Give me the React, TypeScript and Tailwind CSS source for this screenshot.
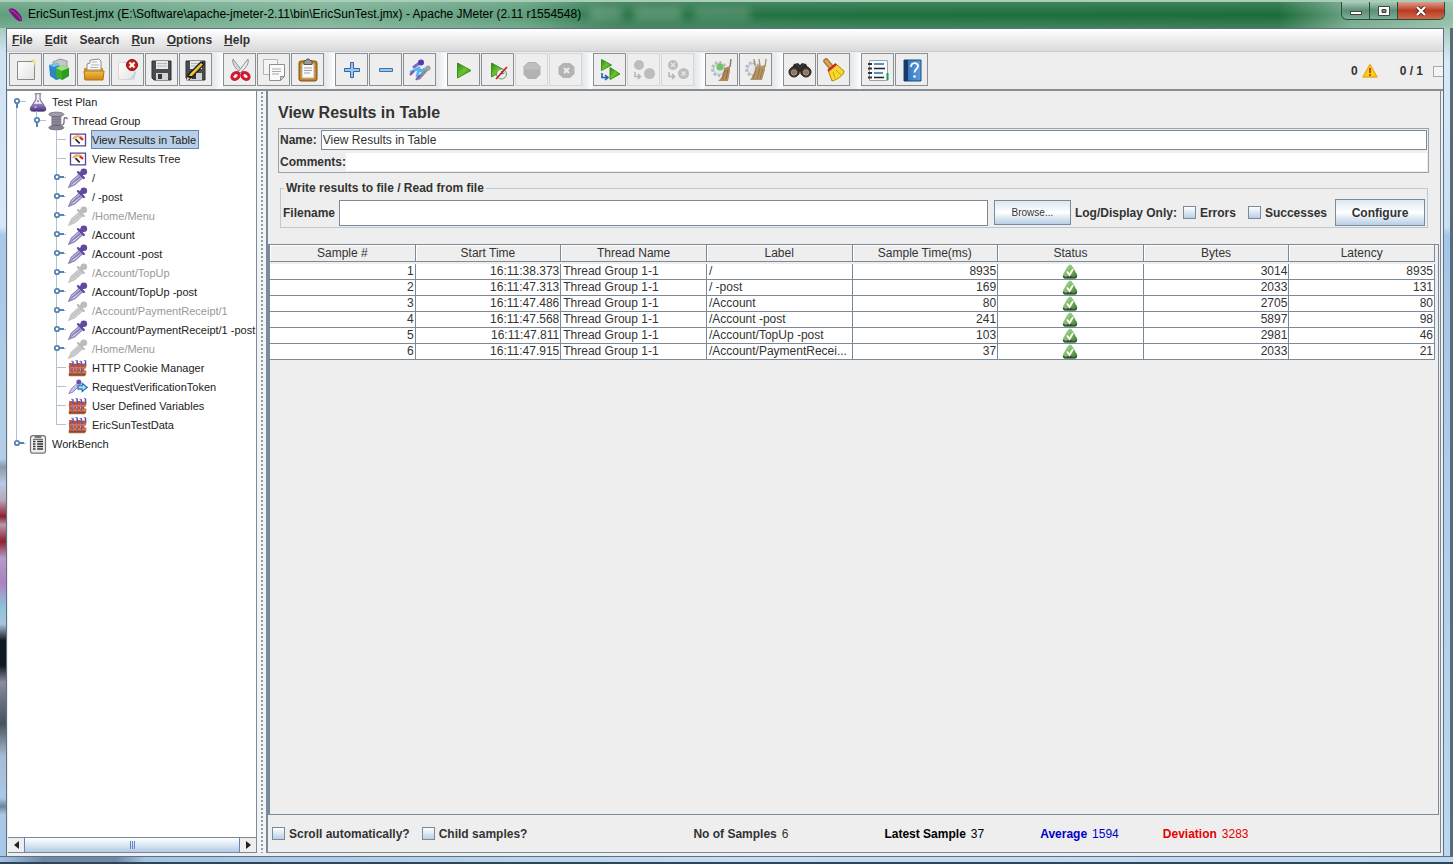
import { useState, type ReactNode } from "react";
import clsx from "clsx";

type Guide = "none" | "line" | "tee" | "corner" | "open" | "openLast" | "closed" | "closedLast";

type Node = {
  label: string;
  icon: keyof typeof treeIcons;
  guides: Guide[];
  disabled?: boolean;
};

type Tool = { name: string; icon: ReactNode; disabled?: boolean };

const samples = [
  { n: 1, start: "16:11:38.373", thread: "Thread Group 1-1", label: "/", time: 8935, bytes: 3014, latency: 8935 },
  { n: 2, start: "16:11:47.313", thread: "Thread Group 1-1", label: "/ -post", time: 169, bytes: 2033, latency: 131 },
  { n: 3, start: "16:11:47.486", thread: "Thread Group 1-1", label: "/Account", time: 80, bytes: 2705, latency: 80 },
  { n: 4, start: "16:11:47.568", thread: "Thread Group 1-1", label: "/Account -post", time: 241, bytes: 5897, latency: 98 },
  { n: 5, start: "16:11:47.811", thread: "Thread Group 1-1", label: "/Account/TopUp -post", time: 103, bytes: 2981, latency: 46 },
  { n: 6, start: "16:11:47.915", thread: "Thread Group 1-1", label: "/Account/PaymentRecei...", time: 37, bytes: 2033, latency: 21 },
];

const columns = ["Sample #", "Start Time", "Thread Name", "Label", "Sample Time(ms)", "Status", "Bytes", "Latency"];

const menus = [
  { key: "F", rest: "ile" },
  { key: "E", rest: "dit" },
  { key: "", rest: "Search" },
  { key: "R", rest: "un" },
  { key: "O", rest: "ptions" },
  { key: "H", rest: "elp" },
];

/* ---------- shared gradients ---------- */

function Gradients() {
  return (
    <svg className="absolute size-0" aria-hidden="true">
      <defs>
        <linearGradient id="green" x1="0" y1="0" x2="1" y2="1">
          <stop offset="0" stopColor="#1f8a1c" />
          <stop offset="0.5" stopColor="#6cc52c" />
          <stop offset="1" stopColor="#2c7f10" />
        </linearGradient>
        <linearGradient id="folder" x1="0" y1="0" x2="0" y2="1">
          <stop offset="0" stopColor="#f3bd4e" />
          <stop offset="1" stopColor="#cf8512" />
        </linearGradient>
        <linearGradient id="paper" x1="0" y1="0" x2="1" y2="1">
          <stop offset="0" stopColor="#ffffff" />
          <stop offset="1" stopColor="#e2e2e2" />
        </linearGradient>
        <linearGradient id="book" x1="0" y1="0" x2="1" y2="0">
          <stop offset="0" stopColor="#2f6fb8" />
          <stop offset="1" stopColor="#5a9be0" />
        </linearGradient>
        <linearGradient id="tick" x1="0" y1="0" x2="1" y2="1">
          <stop offset="0" stopColor="#b4dca4" />
          <stop offset="0.5" stopColor="#7db868" />
          <stop offset="1" stopColor="#3c6e32" />
        </linearGradient>
        <linearGradient id="flask" x1="0" y1="0" x2="0" y2="1">
          <stop offset="0" stopColor="#9c86c8" />
          <stop offset="1" stopColor="#4a2f7c" />
        </linearGradient>
      </defs>
    </svg>
  );
}

function Icon({ children, className = "size-6" }: { children: ReactNode; className?: string }) {
  return (
    <svg viewBox="0 0 24 24" className={clsx("block shrink-0", className)} fill="none" aria-hidden="true">
      {children}
    </svg>
  );
}

/* ---------- toolbar icons ---------- */

const floppy = (
  <>
    <path d="M2 3h19v19H4l-2-2z" fill="#4a4d50" stroke="#2f3133" />
    <path d="M6 3h12v8H6z" fill="#e6e8ea" />
    <path d="M7 5.500h10M7 8h10" stroke="#b4b8bc" />
    <path d="M6 15h12v7H6z" fill="#d0d3d6" />
    <path d="M8 16h4v5H8z" fill="#34373a" />
  </>
);

const grayNodes = (
  <>
    <circle cx="7" cy="7" r="5" fill="#bdbdbd" />
    <circle cx="17.500" cy="15.500" r="5.500" fill="#bdbdbd" />
    <path d="M3 14v4.500h5M6 16l2.500 2.500L6 21" stroke="#b5b5b5" strokeWidth="1.500" />
  </>
);

const gear = (
  <>
    <circle cx="9" cy="11" r="6.500" stroke="#b4bcc4" strokeWidth="3" strokeDasharray="2.500 1.800" />
    <circle cx="9" cy="11" r="5.500" fill="#e3e8ea" stroke="#b4bcc4" />
  </>
);

const toolGroups: Tool[][] = [
  [
    {
      name: "New",
      icon: (
        <Icon>
          <path d="M3.500 3.500h17v18h-17z" fill="url(#paper)" stroke="#8a8a8a" />
          <path d="M15 2l5 2 1 6 1-7-2-2z" fill="#f0ea7c" />
        </Icon>
      ),
    },
    {
      name: "Templates",
      icon: (
        <Icon>
          <path d="M5 4l7-3 7 2v8L5 12z" fill="#c3c8cc" stroke="#8d959b" />
          <path d="M1 7l9-2 2 4v12l-4 1-6-4z" fill="#2a86c8" />
          <path d="M1 7l9-2 2 2-6 2z" fill="#7dc2ec" />
          <path d="M8 10l7-3 6 3v8l-7 4-6-3z" fill="#3fae2a" />
          <path d="M8 10l7-3 6 3-7 3z" fill="#9be27c" />
          <path d="M14 13l7-3v8l-7 4z" fill="#2f9a22" />
        </Icon>
      ),
    },
    {
      name: "Open",
      icon: (
        <Icon>
          <path d="M5 12V6l3-1V2l9-1 2 2v9z" fill="#fafafa" stroke="#8b8b8b" />
          <path d="M10 4h5M9 7h8M8 9.500h8" stroke="#b4b4b4" />
          <path d="M2 10h3v3h14v-3h2v11l-1 1H3l-1-1z" fill="#d69020" />
          <path d="M2 13h20l-1 9H3z" fill="url(#folder)" stroke="#b5740f" />
        </Icon>
      ),
    },
    {
      name: "Close",
      icon: (
        <Icon>
          <path d="M2.500 4.500h16v17h-16z" fill="url(#paper)" stroke="#d8d8d8" />
          <path d="M20 13c0 5-3 8-8 8.500 5-2 5-5 8-8.500z" fill="#a6d5df" />
          <circle cx="16" cy="7" r="5.500" fill="#c4201c" stroke="#8c100e" />
          <path d="M13.500 4.500l5 5M18.500 4.500l-5 5" stroke="#fff" strokeWidth="2" />
        </Icon>
      ),
    },
    { name: "Save", icon: <Icon>{floppy}</Icon> },
    {
      name: "Save as",
      icon: (
        <Icon>
          {floppy}
          <path d="M2 23l2-7L17 3l4 3L8 20z" fill="#1c1c1c" />
          <path d="M5 18l1-2L17 5l2 1.500L8 18z" fill="#f2c230" />
          <path d="M2 23l1.500-4L6 20.500z" fill="#f4dcae" />
        </Icon>
      ),
    },
  ],
  [
    {
      name: "Cut",
      icon: (
        <Icon>
          <path d="M5 1c-1 4 1 8 8 14l2-1C11 9 8 5 5 1z" fill="#d9dcde" stroke="#8b9094" />
          <path d="M20 1c1 4-1 8-8 14l-2-1c4-5 7-9 10-13z" fill="#eceeef" stroke="#8b9094" />
          <ellipse cx="7.500" cy="18" rx="4" ry="3" stroke="#d01830" strokeWidth="3" transform="rotate(-40 7.500 18)" />
          <ellipse cx="17.500" cy="18" rx="4" ry="3" stroke="#d01830" strokeWidth="3" transform="rotate(40 17.500 18)" />
        </Icon>
      ),
    },
    {
      name: "Copy",
      icon: (
        <Icon>
          <path d="M1.500 1.500h14v15h-14z" fill="#f4f4f4" stroke="#b4b4b4" />
          <path d="M7.500 6.500h15v12l-4 4h-11z" fill="#fafafa" stroke="#8f8f8f" />
          <path d="M10 11h9M10 13.500h9M10 16h7" stroke="#a9a9a9" />
          <path d="M18.500 22.500v-4h4z" fill="#d0d0d0" stroke="#8f8f8f" />
        </Icon>
      ),
    },
    {
      name: "Paste",
      icon: (
        <Icon>
          <rect x="3" y="3" width="18" height="20" rx="2" fill="#c48420" stroke="#7d5210" />
          <path d="M6 6h12v14H6z" fill="#fafafa" stroke="#b9b9b9" />
          <path d="M8 10h8M8 12.500h8M8 15h6" stroke="#9f9f9f" />
          <path d="M8 2.500h2l1-1.500h2l1 1.500h2v4H8z" fill="#9a9a96" stroke="#55554f" />
        </Icon>
      ),
    },
  ],
  [
    {
      name: "Expand all",
      icon: (
        <Icon>
          <path d="M10.500 4.500h3v6h6v3h-6v6h-3v-6h-6v-3h6z" fill="#9cc6ee" stroke="#2f68a8" />
        </Icon>
      ),
    },
    {
      name: "Collapse all",
      icon: (
        <Icon>
          <path d="M5.500 10.500h13v3h-13z" fill="#9cc6ee" stroke="#3f74ac" />
        </Icon>
      ),
    },
    {
      name: "Toggle",
      icon: (
        <Icon>
          <path d="M6 9l7-5" stroke="#7a6cc4" strokeWidth="3" strokeLinecap="round" />
          <circle cx="13" cy="4.500" r="3" fill="#5b35b0" />
          <path d="M11 20l8-9" stroke="#8a8a9c" strokeWidth="3.500" strokeLinecap="round" />
          <circle cx="20" cy="10" r="2.600" fill="#a3a394" />
          <path d="M3 14l8-4 1 3 5-2M11 11l-2 7" stroke="#4fb6f0" strokeWidth="2.600" strokeLinecap="round" />
          <path d="M2 17l4-4M8 22l4-5" stroke="#7a54b8" strokeWidth="2" />
        </Icon>
      ),
    },
  ],
  [
    {
      name: "Start",
      icon: (
        <Icon>
          <path d="M5.500 5v15L19 12.500z" fill="url(#green)" stroke="#3b8f1c" />
        </Icon>
      ),
    },
    {
      name: "Start no pauses",
      icon: (
        <Icon>
          <path d="M5.500 5v14L18 12z" fill="url(#green)" stroke="#3b8f1c" />
          <circle cx="15.500" cy="16" r="5" fill="#e8efe8" stroke="#6b8f78" />
          <path d="M15.500 13v3l3-1" stroke="#5d6f66" />
          <path d="M10 21L21 9" stroke="#cc1414" strokeWidth="1.600" />
        </Icon>
      ),
    },
    {
      name: "Stop",
      disabled: true,
      icon: (
        <Icon>
          <path d="M8 4h8l4.500 4.500v8L16 21H8l-4.500-4.500v-8z" fill="#b3b3b3" />
          <path d="M8 5h8l3 3.500v3H5v-3z" fill="#bebebe" />
        </Icon>
      ),
    },
    {
      name: "Shutdown",
      disabled: true,
      icon: (
        <Icon>
          <path d="M9 5h7l4.500 4v7L16 20H9l-4.500-4V9z" fill="#b3b3b3" />
          <path d="M10 10l5 5M15 10l-5 5" stroke="#ececec" strokeWidth="2.200" />
        </Icon>
      ),
    },
  ],
  [
    {
      name: "Remote start all",
      icon: (
        <Icon>
          <path d="M3.500 1.500v11l10-5.500z" fill="url(#green)" stroke="#3b8f1c" />
          <path d="M12 9.500v12L22 16z" fill="url(#green)" stroke="#3b8f1c" />
          <path d="M4 15v4.500h5M7 17l3 2.500L7 22" stroke="#1f62a8" strokeWidth="1.600" />
        </Icon>
      ),
    },
    { name: "Remote stop all", disabled: true, icon: <Icon>{grayNodes}</Icon> },
    {
      name: "Remote shutdown all",
      disabled: true,
      icon: (
        <Icon>
          {grayNodes}
          <path d="M5 5l4 4M9 5L5 9M15.500 13.500l4 4M19.500 13.500l-4 4" stroke="#e6e6e6" strokeWidth="1.400" />
        </Icon>
      ),
    },
  ],
  [
    {
      name: "Clear",
      icon: (
        <Icon>
          {gear}
          <circle cx="10" cy="9" r="3.500" fill="#6fc46a" />
          <path d="M20 9l1-8" stroke="#9a8468" strokeWidth="1.600" />
          <path d="M14 10l6-2v5l-2 10H8c4-3 6-8 6-13z" fill="#b08a5c" />
          <path d="M15 12l-3 9M18 11l-2 10" stroke="#8f6c44" />
        </Icon>
      ),
    },
    {
      name: "Clear all",
      icon: (
        <Icon>
          {gear}
          <path d="M11 8l-1-7M16 8l-1-7M21 9l1-8" stroke="#a89478" strokeWidth="1.400" />
          <path d="M11 9l4-2 2 1 4-1v5l-3 10H6c3-4 5-8 5-13z" fill="#b59468" />
          <path d="M12 12l-3 9M16 10l-3 11M19 11l-3 10" stroke="#967650" />
        </Icon>
      ),
    },
  ],
  [
    {
      name: "Search",
      icon: (
        <Icon>
          <path d="M6 6l4-1 2 2 2-2 4 1 5 9-10 2-1-4-1 4-10-2z" fill="#33302e" />
          <circle cx="6" cy="14" r="5" fill="#4a3a30" stroke="#1d1a18" />
          <circle cx="18" cy="14" r="5" fill="#4a3a30" stroke="#1d1a18" />
          <circle cx="6" cy="14.500" r="2.600" fill="#8a7260" stroke="#b29a86" />
          <circle cx="18" cy="14.500" r="2.600" fill="#8a7260" stroke="#b29a86" />
        </Icon>
      ),
    },
    {
      name: "Reset search",
      icon: (
        <Icon>
          <path d="M4 3l5 6" stroke="#a8742c" strokeWidth="5.500" strokeLinecap="round" />
          <path d="M4 3l5 6" stroke="#d8a458" strokeWidth="3" strokeLinecap="round" />
          <path d="M6 12l8-6 8 7c0 5-8 9-12 10z" fill="#f6d82c" stroke="#b08410" />
          <path d="M5.500 11.500L13.500 5l1.500 2-8.500 7z" fill="#c8301c" />
          <path d="M11 14l2 6M14 12l5 5" stroke="#d2a012" />
        </Icon>
      ),
    },
  ],
  [
    {
      name: "Function helper",
      icon: (
        <Icon>
          <path d="M3.500 2.500h18v20h-18z" fill="#f8fafc" stroke="#9aa4ad" />
          <path d="M8 6h10M8 15h9" stroke="#1f6fb8" strokeWidth="1.400" />
          <path d="M8 10.500h11M8 19.500h10" stroke="#222" strokeWidth="1.400" />
          <path d="M2 6h4M2 10.500h4M2 15h4M2 19.500h4" stroke="#333" strokeWidth="1.800" />
          <path d="M20.500 15h2v7h-2z" fill="#1f9a54" />
        </Icon>
      ),
    },
    {
      name: "Help",
      icon: (
        <Icon>
          <path d="M4 2h17v21H4z" fill="url(#book)" stroke="#1c4a80" />
          <path d="M4 2h4v21H4z" fill="#173a66" />
          <path d="M11 9c0-5 7-5 7-1 0 3-3.500 3-3.500 6.500" stroke="#fff" strokeWidth="1.800" />
          <circle cx="14.500" cy="18.500" r="1.300" fill="#fff" />
        </Icon>
      ),
    },
  ],
];

/* ---------- tree icons ---------- */

function Pipette({ body, bulb, glass }: { body: string; bulb: string; glass: string }) {
  return (
    <>
      <path d="M1 23l3-7L14 7l4 4L8 20z" fill={glass} stroke={body} strokeWidth="1.600" />
      <path d="M2 22l3-5L14 9l2 2z" fill={body} />
      <path d="M12 5l7 7" stroke={bulb} strokeWidth="2.800" strokeLinecap="round" />
      <path d="M15 8l4-4" stroke={bulb} strokeWidth="5" />
      <circle cx="19" cy="4.500" r="4" fill={bulb} />
    </>
  );
}

const treeIcons = {
  flask: (
    <>
      <path d="M8 2h8M9.500 2v7L3 19c-1 3 1 4 3 4h12c2 0 4-1 3-4L14.500 9V2z" fill="#f3f1f8" stroke="#77708a" strokeWidth="1.300" />
      <path d="M6.500 14h11l4 6c0 2-1 3-3 3H6c-2 0-4-1-3-4z" fill="url(#flask)" />
      <circle cx="9" cy="18" r="1.500" fill="#b7a5e0" />
      <circle cx="12" cy="11" r="1.200" fill="#8a74b8" />
    </>
  ),
  spool: (
    <>
      <path d="M4 4h12v15H4z" fill="#8d8798" />
      <path d="M5 7h10M5 10h10M5 13h10M5 16h10" stroke="#787284" />
      <ellipse cx="10" cy="4" rx="9" ry="2.600" fill="#a39dae" stroke="#6c6678" />
      <ellipse cx="10" cy="20" rx="9" ry="2.600" fill="#8b8498" stroke="#625c6e" />
      <path d="M16 17c6 0 1-9 5-9 2 0 2 1 2 2" stroke="#6b6478" strokeWidth="1.500" />
    </>
  ),
  gauge: (
    <>
      <path d="M3 5h18v14H3z" fill="#fff" stroke="#54449a" strokeWidth="1.600" />
      <path d="M6 11c2-4 9-5 12 0" stroke="#ecb060" strokeWidth="2.600" />
      <path d="M14 9l4 3" stroke="#cf2a1c" strokeWidth="2.200" />
      <path d="M9 11l5 5" stroke="#222" strokeWidth="2" />
    </>
  ),
  pipette: <Pipette body="#8b80b8" bulb="#6249a0" glass="#e4e0f0" />,
  pipetteOff: <Pipette body="#c4c4c4" bulb="#bcbcbc" glass="#d4d4d4" />,
  config: (
    <>
      <path d="M1 10l3-3h18v4l-1 2H1zM1 18l3-3h18v4l-2 3H1z" fill="#b4704a" />
      <path d="M3 6v15M8 7v14M13 6v15M18 7v14" stroke="#c0503a" strokeWidth="3.200" />
      <path d="M6 4v6M11 3v7M16 4v6M21 3v6" stroke="#5b4fae" strokeWidth="1.800" />
      <path d="M4 4h2M9 3h2M14 4h2M19 3h2" stroke="#8878c8" strokeWidth="1.400" />
      <path d="M2 12h19M2 17h19" stroke="#d89878" strokeWidth="1.200" />
      <path d="M5 12v6M11 12v6M16 12v6" stroke="#7a5a8a" strokeWidth="1.600" />
      <path d="M1 20h20" stroke="#8a4a30" strokeWidth="1.600" />
    </>
  ),
  extractor: (
    <>
      <path d="M1 20l3-6 8-7 3 2-9 9z" fill="#c8c0e4" stroke="#8276b4" />
      <circle cx="13" cy="6" r="3" fill="#6a54a8" />
      <path d="M12 10.500h5V7.500l6 5-6 5v-3h-5z" fill="#a4dcf4" stroke="#1f6fb0" strokeWidth="1.400" />
    </>
  ),
  clipboard: (
    <>
      <rect x="3" y="2" width="18" height="21" rx="3" fill="#f0f0f0" stroke="#777" strokeWidth="1.500" />
      <path d="M8 2h8v3H8z" fill="#777" />
      <path d="M6 9h3M6 12h3M6 15h3M6 18h3M11 9h7M11 12h7M11 15h7M11 18h7" stroke="#333" strokeWidth="1.600" />
      <path d="M6 6.500h12" stroke="#444" />
    </>
  ),
};

const tree: Node[] = [
  { label: "Test Plan", icon: "flask", guides: ["open"] },
  { label: "Thread Group", icon: "spool", guides: ["line", "openLast"] },
  { label: "View Results in Table", icon: "gauge", guides: ["line", "none", "tee"] },
  { label: "View Results Tree", icon: "gauge", guides: ["line", "none", "tee"] },
  { label: "/", icon: "pipette", guides: ["line", "none", "closed"] },
  { label: "/ -post", icon: "pipette", guides: ["line", "none", "closed"] },
  { label: "/Home/Menu", icon: "pipetteOff", guides: ["line", "none", "closed"], disabled: true },
  { label: "/Account", icon: "pipette", guides: ["line", "none", "closed"] },
  { label: "/Account -post", icon: "pipette", guides: ["line", "none", "closed"] },
  { label: "/Account/TopUp", icon: "pipetteOff", guides: ["line", "none", "closed"], disabled: true },
  { label: "/Account/TopUp -post", icon: "pipette", guides: ["line", "none", "closed"] },
  { label: "/Account/PaymentReceipt/1", icon: "pipetteOff", guides: ["line", "none", "closed"], disabled: true },
  { label: "/Account/PaymentReceipt/1 -post", icon: "pipette", guides: ["line", "none", "closed"] },
  { label: "/Home/Menu", icon: "pipetteOff", guides: ["line", "none", "closed"], disabled: true },
  { label: "HTTP Cookie Manager", icon: "config", guides: ["line", "none", "tee"] },
  { label: "RequestVerificationToken", icon: "extractor", guides: ["line", "none", "tee"] },
  { label: "User Defined Variables", icon: "config", guides: ["line", "none", "tee"] },
  { label: "EricSunTestData", icon: "config", guides: ["line", "none", "corner"] },
  { label: "WorkBench", icon: "clipboard", guides: ["closedLast"] },
];

function GuideCell({ kind }: { kind: Guide }) {
  const up = kind !== "none" && kind !== "open";
  const down = kind === "line" || kind === "tee" || kind === "closed" || kind === "open";
  const handle = kind.startsWith("open") || kind.startsWith("closed");
  return (
    <svg viewBox="0 0 20 19" className="h-[19px] w-5 shrink-0" fill="none" aria-hidden="true">
      {up && <path d="M8.500 0v10" stroke="#b0c2d4" />}
      {down && <path d="M8.500 9v10" stroke="#b0c2d4" />}
      {kind !== "none" && kind !== "line" && <path d="M9 9.500h9" stroke="#b0c2d4" />}
      {handle && (
        <>
          {kind.startsWith("open") ? (
            <path d="M9 11v5" stroke="#5a82b4" strokeWidth="2" />
          ) : (
            <path d="M11 9h5" stroke="#5a82b4" strokeWidth="2" />
          )}
          <circle cx="9" cy="9" r="2.200" fill="#fff" stroke="#5a82b4" strokeWidth="1.800" />
        </>
      )}
    </svg>
  );
}

function TreeRow({ node, selected, onSelect }: { node: Node; selected: boolean; onSelect: () => void }) {
  return (
    <li className="flex h-[19px] items-center">
      {node.guides.map((g, i) => (
        <GuideCell key={i} kind={g} />
      ))}
      <Icon className="mr-[3px] size-5">{treeIcons[node.icon]}</Icon>
      <button
        onClick={onSelect}
        className={clsx(
          "h-[19px] whitespace-nowrap border pr-0.5 text-[11px] leading-4",
          selected ? "border-[#6382bf] bg-[#b8cfe5]" : "border-transparent",
          node.disabled ? "text-[#999]" : "text-[#222]",
        )}
      >
        {node.label}
      </button>
    </li>
  );
}

function TickBox({ id, label }: { id: string; label: string }) {
  return (
    <span className="flex items-center gap-1">
      <input
        id={id}
        type="checkbox"
        className="size-[13px] shrink-0 appearance-none border border-[#7a8a99] bg-linear-to-b from-white to-[#b8cfe5] checked:bg-[#6382bf]"
      />
      <label htmlFor={id} className="whitespace-nowrap font-bold">
        {label}
      </label>
    </span>
  );
}

function PassIcon() {
  return (
    <svg viewBox="0 0 16 15" className="mx-auto block h-[15px] w-4" fill="none" aria-label="Success">
      <path d="M8 .500c1 0 2.500 2 4 4.500l3 5.500c.5 2-.5 3.500-2 4H3c-1.500-.5-2.500-2-2-4L4 5C5.500 2.500 7 .500 8 .500z" fill="url(#tick)" />
      <path d="M.800 11.500L4 13l4-1.500 4 2 3.200-2c0 2-1 3-2.200 3H3C1.500 14.500.800 13.500.800 11.500z" fill="#2f5228" />
      <path d="M5 7.500l2.500 3.500 3.500-6" stroke="#fbfff4" strokeWidth="1.800" />
    </svg>
  );
}

function TitleBar() {
  return (
    <header className="relative flex h-7 shrink-0 items-center overflow-hidden border-t-2 border-[#a8cdb9] bg-[linear-gradient(90deg,#5f9f7d_0,#79b092_22%,#5c9c7a_36%,#2a7549_42%,#1f7040_60%,#1c6b3a_88%,#6da486_93%,#8fbca4_100%)]">
      <div className="absolute inset-0 bg-linear-to-b from-white/15 via-transparent to-white/15" />
      <div className="absolute top-1.5 left-[590px] flex gap-3 blur-xs" aria-hidden="true">
        <span className="h-3 w-8 bg-white/25" />
        <span className="h-3 w-12 bg-white/25" />
        <span className="h-3 w-14 bg-white/20" />
      </div>
      <svg viewBox="0 0 16 16" className="relative ml-2 size-4" fill="none" aria-hidden="true">
        <path d="M1 2c2-1.500 5-1 8 2s6 7 5 10c-3 1-6-1-9-5S0 4 1 2z" fill="#7c1480" />
        <path d="M2 3c4 1 8 5 11 10" stroke="#b84cc0" />
      </svg>
      <h1 className="relative ml-1 truncate pb-0.5 font-['Liberation_Sans',Arial,sans-serif] text-[12px] text-black">
        EricSunTest.jmx (E:\Software\apache-jmeter-2.11\bin\EricSunTest.jmx) - Apache JMeter (2.11 r1554548)
      </h1>
      <div className="relative mr-2 ml-auto flex h-[18px] shrink-0 self-start overflow-hidden rounded-b-md border border-t-0 border-[#24503a] text-white">
        <button aria-label="Minimize" className="grid w-7 place-items-center border-r border-[#24503a] bg-linear-to-b from-[#a8cbb8] via-[#5c8f76] to-[#7fae96]">
          <span className="mt-1 h-1 w-3 border border-[#444] bg-white" />
        </button>
        <button aria-label="Maximize" className="grid w-7 place-items-center border-r border-[#24503a] bg-linear-to-b from-[#a8cbb8] via-[#5c8f76] to-[#7fae96]">
          <svg viewBox="0 0 12 10" className="h-2.5 w-3" fill="none" aria-hidden="true">
            <path d="M.5.500h11v9H.5z" fill="#fff" stroke="#444" />
            <path d="M4 3.500h4v3H4z" fill="#5c8f76" stroke="#444" />
          </svg>
        </button>
        <button aria-label="Close window" className="grid w-[46px] place-items-center bg-linear-to-b from-[#dd9c8c] via-[#b93a20] to-[#d0684c]">
          <svg viewBox="0 0 12 10" className="h-2.5 w-3" aria-hidden="true">
            <path d="M2 1l8 8M10 1L2 9" stroke="#5a2018" strokeWidth="4" />
            <path d="M2 1l8 8M10 1L2 9" stroke="#fff" strokeWidth="2.400" />
          </svg>
        </button>
      </div>
    </header>
  );
}

function MenuBar() {
  return (
    <nav className="flex h-[23px] shrink-0 items-center gap-3 border-b border-[#ccc] bg-linear-to-b from-white to-[#dadada] pl-[5px] font-bold">
      {menus.map((m) => (
        <button key={m.key + m.rest}>
          {m.key && <u>{m.key}</u>}
          {m.rest}
        </button>
      ))}
    </nav>
  );
}

function Toolbar() {
  return (
    <div className="flex h-[39px] shrink-0 items-start border-b-2 border-[#888d92] pt-px">
      <div className="flex pl-0.5">
        {toolGroups.map((group, i) => (
          <div key={i} className="flex">
            {i > 0 && <span className="h-9 w-[11px] bg-linear-to-r from-[#e2e6ea] to-white" />}
            <div className="flex gap-px">
              {group.map((tool) => (
                <button
                  key={tool.name}
                  aria-label={tool.name}
                  disabled={tool.disabled}
                  className={clsx(
                    "grid size-[33px] place-items-center border bg-[#eee]",
                    tool.disabled ? "border-[#d4d6d8]" : "border-[#8a9096]",
                  )}
                >
                  {tool.icon}
                </button>
              ))}
            </div>
          </div>
        ))}
      </div>
      <div className="ml-auto flex h-9 items-center overflow-hidden font-bold">
        <span>0</span>
        <svg viewBox="0 0 16 16" className="ml-1 size-4" fill="none" aria-hidden="true">
          <path d="M8 1.500L15 14H1z" fill="#fcd116" stroke="#f0a818" strokeWidth="1.400" strokeLinejoin="round" />
          <path d="M8 5v5M8 11v2" stroke="#a04a08" strokeWidth="1.800" />
        </svg>
        <span className="ml-[22px]">0 / 1</span>
        <span className="ml-2.5 h-[11px] w-2.5 border border-r-0 border-[#aaa] bg-[#f4f4f4]" />
      </div>
    </div>
  );
}

function TreePane() {
  const [selected, setSelected] = useState(2);
  return (
    <aside className="flex w-[249px] shrink-0 flex-col border-r border-[#7a8a99] bg-white">
      <ul className="flex-1 overflow-hidden pt-px">
        {tree.map((node, i) => (
          <TreeRow key={i} node={node} selected={i === selected} onSelect={() => setSelected(i)} />
        ))}
      </ul>
      <div className="flex h-4 shrink-0 border-y border-[#7a8a99] bg-[#eee]">
        <button aria-label="Scroll left" className="grid w-4 place-items-center">
          <svg viewBox="0 0 5 8" className="h-2 w-[5px]" aria-hidden="true">
            <path d="M5 0v8L0 4z" fill="#222" />
          </svg>
        </button>
        <div className="flex flex-1 items-center justify-center gap-px border-x border-[#6382bf] bg-linear-to-b from-white via-[#dbe7f3] to-[#b0cbe6]">
          <span className="h-2 w-px bg-[#6382bf]" />
          <span className="h-2 w-px bg-[#6382bf]" />
          <span className="h-2 w-px bg-[#6382bf]" />
        </div>
        <button aria-label="Scroll right" className="grid w-4 place-items-center">
          <svg viewBox="0 0 5 8" className="h-2 w-[5px]" aria-hidden="true">
            <path d="M0 0v8l5-4z" fill="#222" />
          </svg>
        </button>
      </div>
    </aside>
  );
}

function FileFields() {
  return (
    <>
      <div className="mr-[11px] ml-2.5 border border-[#9aa3ab] p-px">
        <div className="flex h-5 items-center gap-1">
          <label htmlFor="name" className="font-bold">
            Name:
          </label>
          <input
            id="name"
            defaultValue="View Results in Table"
            className="h-5 min-w-0 flex-1 border border-[#7a8a99] bg-white px-px outline-none"
          />
        </div>
        <div className="mt-[3px] flex h-[18px] items-center">
          <label htmlFor="comments" className="font-bold">
            Comments:
          </label>
          <input id="comments" className="h-[18px] min-w-0 flex-1 bg-white px-px outline-none" />
        </div>
      </div>
      <fieldset className="mt-2 mr-3 ml-3 flex-none border border-[#bcc8d2] px-0.5 pb-px">
        <legend className="ml-px px-0.5 font-bold leading-[14px]">Write results to file / Read from file</legend>
        <div className="mt-1 flex h-[27px] items-center">
          <label htmlFor="filename" className="font-bold">
            Filename
          </label>
          <input
            id="filename"
            className="ml-1 h-[26px] min-w-0 flex-1 border border-[#7a8a99] bg-white px-px outline-none"
          />
          <button className="ml-1.5 h-[25px] w-[77px] border border-[#7a8a99] bg-linear-to-b from-[#dce8f3] via-white to-[#b8cfe5] text-[10px]">
            Browse...
          </button>
          <span className="ml-1 whitespace-nowrap font-bold">Log/Display Only:</span>
          <span className="ml-1.5 flex gap-3">
            <TickBox id="errors" label="Errors" />
            <TickBox id="successes" label="Successes" />
          </span>
          <button className="ml-2 h-[27px] w-[90px] border border-[#7a8a99] bg-linear-to-b from-[#dce8f3] via-white to-[#b8cfe5] font-bold">
            Configure
          </button>
        </div>
      </fieldset>
    </>
  );
}

function ResultsTable() {
  const num = "border-r border-b border-[#7a8a99] bg-white pr-px text-right";
  const txt = "truncate border-r border-b border-[#7a8a99] bg-white px-0.5 text-left";
  return (
    <div className="mr-px min-h-0 flex-1 overflow-hidden border border-l-2 border-[#7a8a99] pr-[3px]">
      <table className="w-full table-fixed border-separate border-spacing-0 text-[12px] leading-[15px]">
        <thead>
          <tr>
            {columns.map((c) => (
              <th key={c} scope="col" className="p-0 pb-0.5 font-normal">
                <div className="border-r border-b border-[#7a8a99] text-center leading-4 shadow-[inset_1px_1px_0_#fff]">
                  {c}
                </div>
              </th>
            ))}
          </tr>
        </thead>
        <tbody>
          {samples.map((s) => (
            <tr key={s.n} className="h-4">
              <td className={num}>{s.n}</td>
              <td className={num}>{s.start}</td>
              <td className={txt}>{s.thread}</td>
              <td className={txt}>{s.label}</td>
              <td className={num}>{s.time}</td>
              <td className={num}>
                <PassIcon />
              </td>
              <td className={num}>{s.bytes}</td>
              <td className={num}>{s.latency}</td>
            </tr>
          ))}
        </tbody>
      </table>
    </div>
  );
}

function Stat({ label, value, className }: { label: string; value: number; className?: string }) {
  return (
    <span className={clsx("flex gap-[5px] whitespace-nowrap", className)}>
      <b>{label}</b>
      <span>{value}</span>
    </span>
  );
}

function ResultsPane() {
  return (
    <main className="flex min-w-0 flex-1 flex-col border-r border-b border-l-2 border-[#7a8a99]">
      <h2 className="mt-[11px] mb-1 ml-2.5 text-[16px] font-bold leading-[22px]">View Results in Table</h2>
      <FileFields />
      <div className="mt-4 flex min-h-0 flex-1 flex-col">
        <ResultsTable />
      </div>
      <footer className="flex h-[37px] shrink-0 items-center pl-1">
        <span className="flex gap-3">
          <TickBox id="scroll" label="Scroll automatically?" />
          <TickBox id="child" label="Child samples?" />
        </span>
        <Stat label="No of Samples" value={6} className="ml-[166px]" />
        <Stat label="Latest Sample" value={37} className="ml-24 text-black" />
        <Stat label="Average" value={1594} className="ml-14 text-[#0000c8]" />
        <Stat label="Deviation" value={3283} className="ml-11 text-[#e60000]" />
      </footer>
    </main>
  );
}

export default function App() {
  return (
    <div className="flex h-screen flex-col overflow-hidden bg-[#b9d3ec] font-['Liberation_Sans',Arial,sans-serif] text-[12px] leading-4 text-[#333]">
      <Gradients />
      <TitleBar />
      <div className="flex min-h-0 flex-1">
        {/* glass frame, left edge */}
        <div className="w-1.5 shrink-0 bg-[linear-gradient(180deg,#a9cdbd_0,#cfe3f5_3%,#d6e8f7_24%,#a9c8e8_25%,#b4cfe8_52%,#8a9aa8_53%,#b4cbe2_55%,#b8a8b8_57%,#8c2034_59%,#b89aaa_60%,#8c2034_62%,#b49cc8_64%,#b080c0_67%,#8cc4dc_70%,#a9c4dc_72%,#101820_74%,#101820_77%,#8c8ca0_79%,#5c6878_82%,#48545c_84%,#a8bcd4_88%,#a9c8e8_93%,#708498_94%,#a9c8e8_95%)]" />
        <div className="flex min-w-0 flex-1 flex-col border-x border-t border-[#5f7080] bg-[#eee]">
          <MenuBar />
          <Toolbar />
          <div className="flex min-h-0 flex-1 pr-0.5 pb-[3px] pl-px">
            <TreePane />
            <div className="flex w-[9px] shrink-0 justify-center bg-[#f1f3f5]">
              <span className="w-1 bg-[radial-gradient(#8f9ca8_1px,transparent_1px)] bg-size-[4px_4px]" />
            </div>
            <ResultsPane />
          </div>
        </div>
        {/* glass frame, right edge */}
        <div className="w-[9px] shrink-0 border-r-3 border-[#5b6a78] bg-[linear-gradient(180deg,#a9cdbd_0,#d8eaf8_4%,#c8e0f4_24%,#a4c6e8_25%,#bcd8f0_100%)]" />
      </div>
      <div className="h-2 shrink-0 border-t border-b-2 border-t-[#5f7080] border-b-[#2f4658] bg-[linear-gradient(90deg,#a4c4e4_0,#6f88a8_3%,#6f88a8_8%,#a4c4e4_10%,#c4ddf4_50%,#bcd8f0_100%)]" />
    </div>
  );
}
